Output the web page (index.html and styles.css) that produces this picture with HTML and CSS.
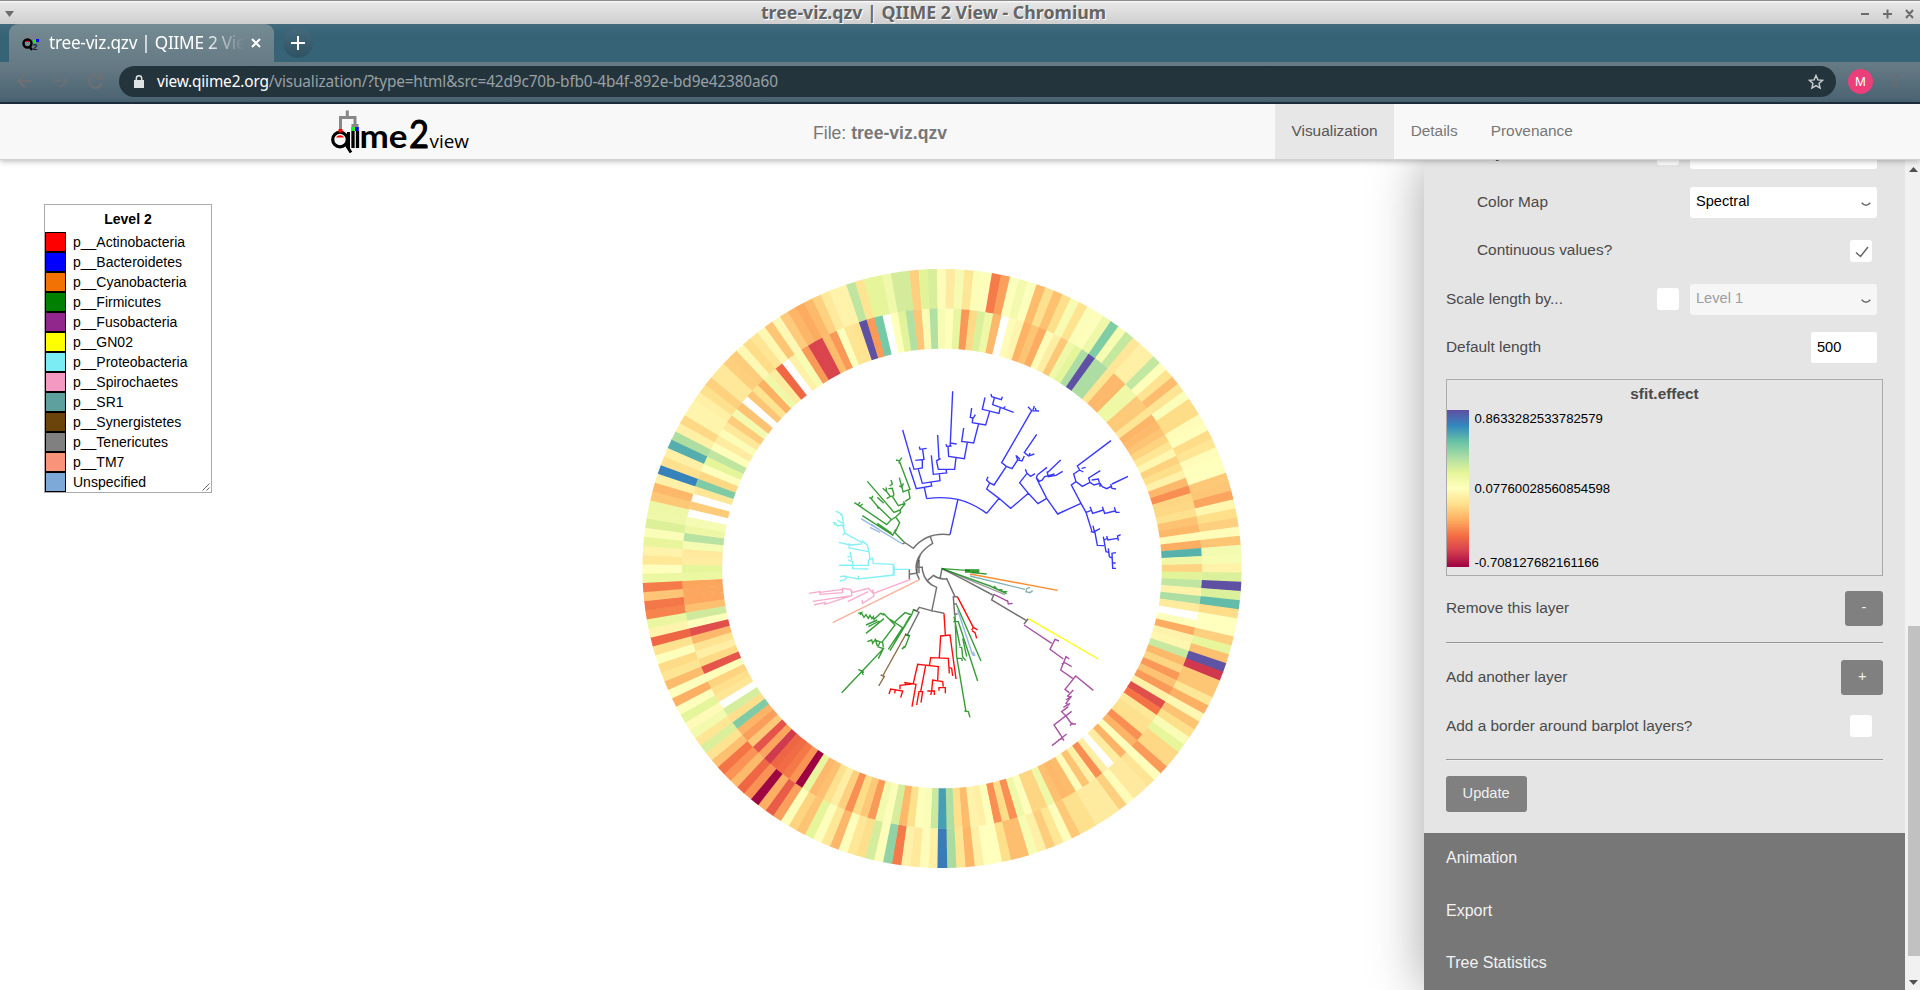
FILE: index.html
```html
<!DOCTYPE html>
<html lang="en">
<head>
<meta charset="utf-8">
<title>tree-viz.qzv | QIIME 2 View</title>
<link rel="stylesheet" href="styles.css">
</head>
<body>
<div class="titlebar">
  <svg class="win-menu" width="9" height="6"><path d="M0 0h9L4.500 6z"/></svg>
  <span class="win-title">tree-viz.qzv | QIIME 2 View - Chromium</span>
  <svg class="win-buttons" width="54" height="12" viewBox="0 0 54 12"><path d="M0 6h8M22 6h9M26.500 1.500v9M45 2l7 8M52 2l-7 8"/></svg>
</div>
<div class="tabstrip">
  <div class="tab">
    <svg class="favicon" width="18" height="18" viewBox="0 0 18 18">
      <path d="M5 5V1.500h9V6" fill="none" stroke="#887f80"/>
      <circle cx="5.500" cy="9.500" r="4" fill="#7a8c94" stroke="#000" stroke-width="2.400"/>
      <path d="M3 8a3 3 0 0 1 5 0z" fill="#f00"/><path d="M7 12l3 4" stroke="#000" stroke-width="2.200"/>
      <path d="M11 6h3v3h-3z" fill="#0f0"/><path d="M14 5h3v3h-3z" fill="#00f"/>
      <text x="10.500" y="16" class="fav-two">2</text>
    </svg>
    <span class="tab-title">tree-viz.qzv | QIIME 2 View</span>
    <svg class="tab-close" width="10" height="10" viewBox="0 0 10 10"><path d="M1 1l8 8M9 1l-8 8"/></svg>
  </div>
  <div class="new-tab"><svg width="14" height="14" viewBox="0 0 14 14"><path d="M7 0v14M0 7h14"/></svg></div>
</div>
<div class="toolbar">
  <svg class="nav-icons" width="88" height="20" viewBox="0 0 88 20">
    <path class="nav-back" d="M15 10H2M8 3.500L1.500 10L8 16.500"/>
    <path class="nav-fwd" d="M36 10h13M43 3.500L49.500 10L43 16.500"/>
    <path class="nav-back" d="M83.500 6A6.500 6.500 0 1 0 85 11.500M85.500 2.500V8H80"/>
  </svg>
  <div class="omnibox">
    <svg class="lock" width="10" height="13" viewBox="0 0 10 13"><path d="M0 5h10v8H0z" fill="#dfe3e5"/><path d="M2.300 5V3.500a2.700 2.700 0 0 1 5.400 0V5" fill="none" stroke="#dfe3e5" stroke-width="1.500"/></svg>
    <span class="url"><b>view.qiime2.org</b>/visualization/?type=html&amp;src=42d9c70b-bfb0-4b4f-892e-bd9e42380a60</span>
    <svg class="star" width="16" height="16" viewBox="0 0 16 16"><path d="M8 1.500l1.900 4.400 4.700.4-3.600 3.100 1.100 4.700L8 11.600l-4.100 2.500L5 9.400 1.400 6.300l4.700-.4z"/></svg>
  </div>
  <div class="avatar">M</div>
  <svg class="kebab" width="4" height="16" viewBox="0 0 4 16"><circle cx="2" cy="3" r="1.700"/><circle cx="2" cy="8" r="1.700"/><circle cx="2" cy="13" r="1.700"/></svg>
</div>

<header class="navbar">
  <svg class="logo" width="144" height="48" viewBox="328 108 144 48">
    <path d="M340.500 131V117.500H355V125M347.300 110.500V117M351.500 125.500H358.500" fill="none" stroke="#888" stroke-width="3"/>
    <circle cx="340" cy="139.500" r="7.300" fill="#f8f8f8" stroke="#000" stroke-width="3.200"/>
    <path d="M336 137.500a4.600 4.600 0 0 1 8 0z" fill="red"/><path d="M338.500 129h4v3.500h-4z" fill="red"/>
    <path d="M345.500 144l5.500 8.500M348.500 132v16" stroke="#000" stroke-width="3"/>
    <path d="M351 127h3.800v4H351z" fill="#0f0"/><path d="M355 127h3.800v4H355z" fill="#00f"/>
    <path d="M353 131v17M357.500 131v17" stroke="#000" stroke-width="3.300"/>
    <text class="logo-word" x="359.500" y="148" textLength="48" lengthAdjust="spacingAndGlyphs">me</text>
    <text class="logo-two" x="409" y="148" textLength="20" lengthAdjust="spacingAndGlyphs">2</text>
    <text class="logo-view" x="429.500" y="148" textLength="39.500" lengthAdjust="spacingAndGlyphs">view</text>
  </svg>
  <div class="file">File: <b>tree-viz.qzv</b></div>
  <nav class="nav"><a class="active">Visualization</a><a>Details</a><a>Provenance</a></nav>
</header>

<main class="main">
  <section class="plot">
    <svg class="canvas" width="1424" height="830" viewBox="0 160 1424 830">
      <g id="rings"></g>
      <g class="branches" transform="translate(790 380) scale(.33333)">
        <path stroke="#0000ff" d="M480 464L504 357M410 356Q460 349 504 358Q550 370 590 400M410 356L403 322M358 262L379 326L425 318L423 306M338 150L372 268L397 264V240M385 268L397 310L450 302L448 282M376 241L402 238L398 209M388 200L390 208L410 205M424 226L430 283L470 279L468 268M440 245L445 268L494 268L498 233M438 243L452 236M447 240L443 165M474 200L476 229L523 236L532 187M468 193L470 199L485 198M480 198L481 189L500 192M481 189L488 34M521 144L515 184L551 189L566 131M548 115L547 128L587 135L599 94M545 84L541 112L550 114L556 104M585 52L577 88L627 100L631 82M603 42L605 50L634 59L637 50M613 54L608 74L631 82L671 97M640 86L646 79"/>
        <path stroke="#0000ff" d="M590 400L627 355M599 309L590 327L627 355L662 385L715 340M594 290L590 300L599 309L612 315L649 259M725 92L635 248L649 259L666 266L683 240M714 80L725 92L747 93M729 90L733 78M738 92L736 84M678 226L683 240L696 243L703 228M690 238L680 228M740 163L703 218L716 228L733 222M716 228L720 219M711 280L689 308L715 340L744 371L770 355M706 268L711 280L722 289L735 281M742 285L739 294L770 355L803 402L873 370M771 262L742 285M742 296L748 304L757 300L764 290L789 283M771 274L775 290L798 286L818 274M772 278L812 240M790 280L794 288M858 305L844 315L873 370L888 397M869 270L851 282L858 305L877 319L900 307M963 182L862 258L869 270L880 276M875 265L887 262M931 272L896 294L900 307L912 315L930 310L937 320L950 326L966 318M905 300L925 297L928 308M930 310V320M962 312L966 325L978 327M966 312L1014 289M888 397L902 392M900 380L908 400L940 390M937 380L944 400L975 393M973 382L978 397H989M888 397L906 455M902 455L915 458L922 496L942 497M909 437L913 455L930 446M940 470L948 515L956 517M943 480L953 474M950 468L954 480L982 475M992 464L983 468L985 482M955 505L958 530L967 535M978 518L966 520L968 565H978M967 549H977"/>
        <path stroke="#008000" d="M342 486L315 458M217 407L308 465L318 447M262 430L305 460M270 438L310 467M315 458L329 428L317 411M207 377L290 434L303 420L317 411L332 397L330 390M193 368L207 377M205 374L210 366M210 378L218 372M303 418L262 378L265 386M262 378L240 352M238 352L245 356L248 347M330 390L312 397L232 304M262 352L281 370M330 390L345 372L340 364M345 370L325 377L307 349M290 356L300 350L313 347M278 325L290 335L288 322M290 335L300 348M295 326L307 325L312 345M299 318L307 312L303 300M345 364L360 355L356 332M340 335L360 328L328 243M318 240L328 243L336 233M328 243V251M340 338L335 320L328 293M328 318L336 322L340 310"/>
        <path stroke="#7aa5dc" d="M213 416L338 492M240 442L270 457M243 432L272 452"/>
        <path class="strong" stroke="#7df0f5" d="M137 393L150 400L157 410L162 440M150 400L158 405M128 428H135L142 438L155 435L160 440L165 460L215 487V492M132 436L136 426M142 420L158 430M158 466L166 456M147 487L180 495L215 492M178 490V500M173 503L235 515M215 482L232 495L238 520L240 540M180 515L185 540M172 530L185 530M175 540L188 545V566L235 567M235 540L248 535L250 550L310 553V585M147 556H235V540"/>
        <path class="trunk" d="M338 492L346 487M342 486L370 505Q410 455 480 464M420 467L428 490Q378 520 378 565M392 522Q382 545 380 580"/>
      </g>
      <g class="branches" transform="translate(790 560) scale(.33333)">
        <path class="trunk" d="M358 28V58M358 43L378 40M378 25Q380 45 388 58M384 22H397V30Q405 70 440 82L425 155M387 0V40M380 153L388 142Q420 152 462 160M370 148L387 157L352 225M345 222L360 227M412 62L430 46Q450 60 470 56L495 110M450 56L456 26L520 58L608 105M612 103L605 120L710 182M715 176L702 192M488 110H502M490 112L494 165M493 132H501M495 162H503"/>
        <path stroke="#808080" d="M456 26L645 104"/>
        <path class="strong" stroke="#7df0f5" d="M312 15V45L205 57V47M312 28H358M205 57L170 50L165 60L150 63M150 50L165 48L172 55M148 16H190"/>
        <path class="strong" stroke="#f7a8ca" d="M362 58L250 100L235 85L185 98L182 88L158 85V98L90 103V95L57 100M158 88L90 97M185 90V107L68 124M235 95L173 125M248 88L252 108L218 130L216 120M185 107L105 133V127L72 135"/>
        <path stroke="#fa9a7c" d="M390 58L128 188"/>
        <path stroke="#008000" d="M205 160L215 157L210 165M215 160L222 172L228 164L235 175L240 166L246 176L250 170L252 178L272 160L282 165M280 160L315 195L275 248M228 195L262 180M235 200L268 183M228 220L282 176M300 178L338 203L295 268M315 185L345 158L365 165L300 272M360 168L310 255M365 165L370 150L378 152M232 245L245 240L248 250L256 238L262 258M255 240L278 248L280 262M270 246L265 258M262 260L280 266L215 335L220 345M265 296L280 266M205 328L222 337M215 335L155 398M348 225L358 228L345 262M335 265L345 262M337 268L343 258"/>
        <path stroke="#008000" d="M500 135L573 303M490 185L505 185L563 363M495 165L500 290L528 455M492 170L510 258M508 262L515 262L518 290L527 302M500 295H515L517 303M518 235L530 290M523 453L535 455L540 472M456 26L600 78L650 101M612 78L622 88L638 90M640 95H652M545 38L590 42"/>
        <path class="thick" stroke="#008000" d="M525 33H568"/>
        <path stroke="#008000" d="M456 26L540 32"/>
        <path class="strong" stroke="#fa8824" d="M540 42L803 91"/>
        <path stroke="#5f9ea0" d="M540 48L705 88M720 82L710 86L708 95L720 98L728 92"/>
        <path stroke="#902288" d="M612 103L655 125M652 120L655 132L668 130"/>
        <path stroke="#902288" d="M702 195L785 250M807 243L795 238L780 268L820 297M838 297L828 290L812 330L848 355M815 312L825 308L845 320M910 391L857 348L825 388L838 398M850 390L833 408L842 412L828 430L838 436M845 408L828 420M840 430L820 442M835 440L815 455L828 468M845 454L792 495L812 525M828 468L845 492L858 492M840 497L848 488M830 522L786 557M812 525L822 542M805 540L818 535"/>
        <path class="strong" stroke="#ffff00" d="M715 176L925 297"/>
        <path stroke="#7aa5dc" d="M503 150L548 285M548 285L556 287M550 275L553 285"/>
        <path class="strong" stroke="#ff0000" d="M502 110L550 202M545 210L550 202L563 210M546 212L555 218L560 235M462 160L466 225M448 293L452 228L480 225L498 357M418 318L422 293L475 295L478 340M475 322L485 325L488 348M370 370L383 313L445 320L443 360M348 376L345 368L378 373L366 440M365 372L330 376V388M297 402L302 387L338 393L332 413M316 388L314 400M407 316L392 395M380 435L387 395H398L393 428M425 395L428 360L458 365L460 380M412 393H433V405M425 395L422 405M447 392V383H466V400"/>
        <path stroke="#6b4513" d="M348 222L278 348M272 345L283 349L266 378"/>
      </g>
    </svg>
    <div class="legend">
      <h4>Level 2</h4>
      <ul>
        <li><i class="sw red"></i>p__Actinobacteria</li>
        <li><i class="sw blue"></i>p__Bacteroidetes</li>
        <li><i class="sw orange"></i>p__Cyanobacteria</li>
        <li><i class="sw green"></i>p__Firmicutes</li>
        <li><i class="sw purple"></i>p__Fusobacteria</li>
        <li><i class="sw yellow"></i>p__GN02</li>
        <li><i class="sw cyan"></i>p__Proteobacteria</li>
        <li><i class="sw pink"></i>p__Spirochaetes</li>
        <li><i class="sw teal"></i>p__SR1</li>
        <li><i class="sw brown"></i>p__Synergistetes</li>
        <li><i class="sw gray"></i>p__Tenericutes</li>
        <li><i class="sw salmon"></i>p__TM7</li>
        <li><i class="sw sky"></i>Unspecified</li>
      </ul>
      <svg class="grip" width="8" height="8" viewBox="0 0 8 8"><path d="M.5 7.500l7-7M4.500 7.500l3-3"/></svg>
    </div>
  </section>
  <aside class="panel">
    <div class="panel-body">
      <div class="row"><label>Color by...</label><span class="check"></span><span class="select"></span></div>
      <div class="row indent"><label>Color Map</label><span class="select">Spectral<svg width="10" height="5" viewBox="0 0 10 5"><path d="M.7.7Q5 5.800 9.300.7"/></svg></span></div>
      <div class="row indent"><label>Continuous values?</label><span class="check solo"><svg width="14" height="12" viewBox="0 0 14 12"><path d="M1 6.500L5.500 10.500L13 1"/></svg></span></div>
      <div class="row"><label>Scale length by...</label><span class="check"></span><span class="select disabled">Level 1<svg width="10" height="5" viewBox="0 0 10 5"><path d="M.7.7Q5 5.800 9.300.7"/></svg></span></div>
      <div class="row"><label>Default length</label><span class="input">500</span></div>
      <div class="scale">
        <h4>sfit.effect</h4>
        <div class="scale-body">
          <div class="ramp"></div>
          <div class="ticks"><span>0.8633282533782579</span><span class="mid">0.07760028560854598</span><span>-0.708127682161166</span></div>
        </div>
      </div>
      <div class="row act"><label>Remove this layer</label><span class="btn">-</span></div>
      <hr>
      <div class="row act"><label>Add another layer</label><span class="btn">+</span></div>
      <div class="row border-row"><label>Add a border around barplot layers?</label><span class="check solo"></span></div>
      <hr>
      <span class="btn update">Update</span>
    </div>
    <div class="accordion"><div>Animation</div><div>Export</div><div>Tree Statistics</div></div>
  </aside>
  <div class="scrollbar">
    <svg width="9" height="5" viewBox="0 0 9 5"><path d="M0 5h9L4.500 0z"/></svg>
    <div class="thumb"></div>
    <svg width="9" height="5" viewBox="0 0 9 5"><path d="M0 0h9L4.500 5z"/></svg>
  </div>
</main>
<script src="rings.js"></script>
</body>
</html>
```
FILE: styles.css
```css
* { box-sizing: border-box; }
body { margin: 0; width: 1920px; height: 990px; overflow: hidden; background: #fff; font-family: "Liberation Sans", Arial, sans-serif; font-size: 15.4px; display: flex; flex-direction: column; }
svg { display: block; flex: none; }

.titlebar { height: 24px; flex: none; display: flex; align-items: center; justify-content: space-between; padding: 2px 5px 0 5px; border-top: 1px solid #8f8c8f; background: linear-gradient(#fff 0, #e6e6e6 2px, #cfcfcf); }
.win-menu { fill: #6b6b6b; }
.win-title { font: bold 17.8px/22px "Noto Sans", sans-serif; color: #656565; text-shadow: 1px 1px 0 #fff; margin: 0 8px 3px 0; white-space: nowrap; }
.win-buttons { fill: none; stroke: #6c6c6c; stroke-width: 2; }

.tabstrip { height: 38px; flex: none; background: linear-gradient(#436b7d, #376377 10px); display: flex; padding-left: 9px; }
.tab { width: 265px; height: 38px; border-radius: 9px 9px 0 0; background: linear-gradient(#758b93, #667b85); display: flex; align-items: center; padding-left: 13px; }
.fav-two { font: bold 9px "Liberation Sans", sans-serif; fill: #223; }
.tab-title { width: 196px; margin-left: 9px; padding-bottom: 1px; overflow: hidden; white-space: nowrap; font: 17.2px/24px "Noto Sans", sans-serif; letter-spacing: -.25px; color: #fff; -webkit-mask-image: linear-gradient(90deg, #000 155px, transparent 195px); mask-image: linear-gradient(90deg, #000 155px, transparent 195px); }
.tab-close { margin-left: 6px; fill: none; stroke: #fff; stroke-width: 2; }
.new-tab { width: 30px; height: 30px; margin: 4px 0 0 9px; border-radius: 50%; background: linear-gradient(#456a7a, #2e5264); display: flex; align-items: center; justify-content: center; }
.new-tab svg { stroke: #fff; stroke-width: 2; }

.toolbar { height: 42px; flex: none; display: flex; align-items: flex-start; padding: 4px 0 0 17px; background: linear-gradient(#687c86, #4a6272); border-bottom: 2px solid #1d313e; }
.nav-icons { margin-top: 5px; fill: none; stroke-width: 2; }
.nav-back { stroke: #6f7074; }
.nav-fwd { stroke: #667078; }
.omnibox { width: 1717px; height: 31px; margin-left: 14px; border-radius: 16px; background: #24343c; display: flex; align-items: center; padding: 0 12px 0 15px; }
.lock { margin-bottom: 1px; }
.url { flex: 1; margin-left: 13px; font: 15.4px/30px "Noto Sans", sans-serif; letter-spacing: -.16px; color: #98a1a5; white-space: nowrap; }
.url b { font-weight: normal; color: #fff; }
.star { fill: none; stroke: #ccd1d3; stroke-width: 1.4; }
.avatar { width: 25px; height: 25px; margin: 3px 0 0 12px; border-radius: 50%; background: #ec3f7a; color: #fff; font: 13px/25px "Liberation Sans", sans-serif; text-align: center; }
.kebab { margin: 7px 0 0 21px; fill: #6e6a6b; }

.navbar { height: 56px; flex: none; display: flex; position: relative; z-index: 3; background: #f8f8f8; border-bottom: 1px solid #d2d2d2; box-shadow: 0 1px 6px rgba(0,0,0,.3); }
.logo { margin: 4px 0 0 328px; }
.logo-word { font: bold 33px Lato, sans-serif; }
.logo-two { font: 38px Lato, sans-serif; stroke: #000; stroke-width: 1px; }
.logo-view { font: 18.500px "Open Sans", sans-serif; }
.file { width: 462px; margin-left: 341px; font-size: 17.6px; line-height: 59px; color: #777; white-space: nowrap; }
.nav { display: flex; }
.nav a { height: 55px; padding: 0 16.5px; line-height: 53px; color: #777; }
.nav .active { background: #e7e7e7; color: #555; }

.main { flex: 1; min-height: 0; display: flex; overflow: hidden; }
.plot { width: 1424px; position: relative; padding: 44px; }
.canvas { position: absolute; left: 0; top: 0; }
.branches path { fill: none; stroke-width: 4.2; opacity: .78; }
.branches .strong { opacity: .95; }
.branches .trunk { stroke: #4a4a4a; stroke-width: 4.4; }
.branches .thick { stroke-width: 11; }

.legend { position: relative; width: 168px; height: 289px; border: 1px solid #aaa; background: #fff; font-size: 14px; color: #000; }
.legend h4 { margin: 0; height: 27px; font-size: 14px; line-height: 29px; text-align: center; }
.legend ul { list-style: none; margin: 0; padding: 0; }
.legend li { display: flex; align-items: center; height: 20px; line-height: 21px; white-space: nowrap; }
.sw { width: 21px; height: 20px; border: 1px solid #000; margin-right: 7px; }
.red { background: #f00; } .blue { background: #00f; } .orange { background: #f27304; } .green { background: #008000; }
.purple { background: #91278d; } .yellow { background: #ff0; } .cyan { background: #7cecf4; } .pink { background: #f49ac2; }
.teal { background: #5da09e; } .brown { background: #6b440b; } .gray { background: #808080; } .salmon { background: #f99379; } .sky { background: #7da9d8; }
.grip { position: absolute; right: 1px; bottom: 1px; stroke: #666; }

.panel { width: 481px; flex: none; position: relative; z-index: 1; height: 830px; display: flex; flex-direction: column; background: #e5e5e5; box-shadow: 0 0 50px rgba(0,0,0,.36); color: #4a4a4a; overflow: hidden; }
.panel-body { margin-top: -30px; padding: 0 22px 0 22px; height: 703px; flex: none; }
.row { display: flex; align-items: center; height: 48.4px; padding-right: 6px; }
.row:first-child { height: 47.4px; margin-bottom: 1px; }
.row label { flex: 1; line-height: 20px; padding-bottom: 1px; }
.row.indent label { padding-left: 31px; }
.select, .input { background: #fff; color: #000; height: 31px; border-radius: 3px; padding: 0 6px; line-height: 29px; }
.select { width: 187px; display: flex; justify-content: space-between; font-size: 14.6px; }
.select svg { margin-top: 15px; fill: none; stroke: #666; stroke-width: 1.4; }
.select.disabled { background: #f6f6f6; color: #9d9d9d; }
.input { width: 66px; line-height: 31px; font-size: 14.6px; }
.check { width: 22px; height: 22px; border-radius: 3px; background: #fff; margin-right: 11px; display: flex; align-items: center; justify-content: center; }
.check.solo { margin-right: 5px; }
.check svg { margin: 2px 0 0 2px; fill: none; stroke: #666; stroke-width: 1.5; }
.scale { margin-top: 7px; height: 197px; border: 1px solid #aaa; }
.scale h4 { margin: 0; height: 30px; font-size: 15.4px; line-height: 28px; text-align: center; }
.scale-body { display: flex; }
.ramp { width: 22px; height: 157px; background: linear-gradient(#5e4fa2, #3288bd 10%, #66c2a5 20%, #abdda4 30%, #e6f598 40%, #ffffbf 50%, #fee08b 60%, #fdae61 70%, #f46d43 80%, #d53e4f 90%, #9e0142); }
.ticks { height: 161px; margin-left: 5.500px; display: flex; flex-direction: column; justify-content: space-between; font-size: 13.2px; line-height: 17px; color: #000; }
.ticks .mid { margin-bottom: 4px; }
.row.act { height: 35px; margin-top: 15px; padding: 0; }
hr { height: 2px; margin: 16px 0 0; border: 0; border-top: 1px solid #979797; border-bottom: 1px solid #ececec; }
.panel hr + .row.act { margin-top: 16px; }
.btn { background: #808080; color: #f0f0f0; border-radius: 3px; height: 35px; line-height: 33px; padding: 0 16.6px; font-size: 14.6px; }
.border-row { margin-top: 7px; height: 49px; }
.border-row + hr { margin-top: 8px; }
.update { display: block; width: 81px; margin-top: 15px; height: 36px; line-height: 34px; }
.accordion { flex: none; height: 157px; background: #777; color: #f2f2f2; font-size: 16px; padding-left: 22px; }
.accordion div { height: 52.5px; line-height: 49px; }

.scrollbar { width: 15px; position: relative; z-index: 1; background: #f1f1f1; display: flex; flex-direction: column; align-items: center; padding: 7px 0 5px 2px; }
.scrollbar svg { fill: #505050; }
.thumb { width: 12px; height: 330px; margin: 454px 0 24px; background: #c1c1c1; }
```
FILE: rings.js
```js
// Cell colours, counter-clockwise from the bottom; "-" is a missing value.
const outer = `3a7cb7 aadca0 fee593 fdb567 fff0a8 ffffbe ffffbe fee08b fdbe70 fdbe70 f7fcb2 fff0a8 fdcd7c ffe796 fffdbc fdc877 fee18e
fee18e ffeba0 ffeba0 ffeba0 fdd07f fffbb9 ffe99f ffe99f fee494 ffffbb fb9b5a fed884 fed884 e8f69b f8fcb4 fee08b fdc473
fff7b2 fdb063 fee796 fdc675 fdc675 d0384d 5e53a4 fdbf70 e8f69b fdcf7e ffffbe ffffbe fedd89 62bca9 daf09b 5e50a3 daf09a
fff2a9 f6fcb2 f3fbb0 fdc574 fffcb9 fdcf7e fedf8a fff6b0 fca55e fdc676 fdc978 ffffbd ffffbd fffcb9 ffe695 fedc88 ffffbb
fffbb8 fedd89 fedd89 fbfeb8 fee594 fdbc6e fee491 ffffbc c1e7a0 fff0a6 fff0a6 ffe698 c5e89f f6fcb1 7fcda5 eff8a8 fdfebb
fbfdb9 fee491 f8fcb3 fee08c fdc170 fee08e fdbb6c fcfebb f3fab0 fdfebb fb9f5c f67b4a fdfebb fbfdb8 fee697 f5fbb1 feeaa0
fffbb8 d8ee9a e3f498 fdcf7f d3eb9b d3eb9b f0f8ab e7f59a e7f59a fee594 bfe5a1 fff3ab fff3ab ffe99d fed281 fdba6b fcac61
fdb567 fdcb7b fff8b4 fdc574 fff8b3 ffe594 fedd89 fdf9b5 fdcd7c fed07e ffe899 ffe899 fed17f ffe08d fff0a6 fff4ac fff4ac
fed884 fff0a6 aedda2 54aead fff0a6 fee18e 3682ba fff0a7 fdb869 fdc876 eef7a5 eff8a8 dcf099 fafdb8 e8f59b fff2aa fee898
feffbd ecf7a2 f57c4a fdc575 f4774a f7834d eaf6a0 fff4ae ee6644 fee28f ffffbc fedb87 fee593 fdbb6c feffbd fdb063 fdfebb
e5f599 fffab7 f3faae fee695 dbef9b fee391 fdbf70 f57446 fa9355 fdba6b ee6644 fa9255 9e0742 fdb063 e95c47 fb9f5c fcfeba
fed481 fdc473 e6f59a fdfebb fee796 fdb76a fdfebb fee796 fedf8b d5ec9c fbfdb8 90d2a4 f57a49 fff1aa fee99d fffcba fff0a6`;

const inner = `489fb4 aedea3 fee08c fdbb6c fff3ac fff0a6 ffffbc fa8f53 fedd89 fa8f53 eff8a8 fffdbc fed683 fed683 eff8a7 fdc070 fdb86a
fdbb6c fffbb8 fdc473 fff1a8 f98e53 ffeea4 - feeca1 fdb467 ffffbb fdb467 f98f53 fee08d fee18e ffe898 f57245 e0504a
fff1a8 fa9a58 fdc272 fa9857 fed683 fdb96a c7e89f fff6b0 fff3ab fdad61 ffffbc - feeb9e acdda3 fff3aa c0e6a1 e2f39a
fed482 f0f8a8 58b2ab fdae62 fffbb8 fdb869 fdc372 fee18e fed884 fed582 f98e52 fdb96b fff1a8 fee08c fed27f fff6b0 ffe695
fed481 fdc473 fdba6b fdb668 ffe594 fdca79 fdca79 eef8a5 eef8a5 fdb96b fdb96b fee594 aedda3 aedda3 5e50a3 aedda3 e5f59a
eff8a8 fdc778 feeda2 fffcba fdac61 fdc473 fdb264 fff5ae fffbb8 - fdb96b eff8a7 dbf09b fed986 fa9757 e9f69f ffffbc
f7fcb3 b2dfa2 fafcb5 fdc676 b2dfa2 e2f399 ffffbc - 76c9a6 fa9a58 5e50a3 fee391 fee594 feffbc fa9857 fdbb6c d9444d
d9444d fa9a58 f7fcb3 fff1a8 - f06744 feeca0 eff8a8 fdb163 fee391 fdc675 - fdc372 f3fab0 fdcd7c ffe899 fbfdb7
ffeca0 feffbb bfe5a1 e6f59a fdfebb fed885 7fcba6 ffe797 - fdcc7b - f5fbb2 edf7a5 b8e2a1 f5fbb2 fee99d feeca0
e5f59a ecf7a2 fca55d fca75f fca65e fdc070 cfea9c fdfebb e04f4b fdb96b fee492 ffeea4 fed986 e5554a ffffbc fed481 fee08d
fee696 - d5ed9c fedf8b 7fcba6 fdb467 fb9d5b fdc979 e5544a fca55e d03a4d ee6544 f16b44 f57848 fa9455 9e0142 eaf69f
fdb86b fdbf70 fee18e ffeea4 fdd07f fa8f53 fedd89 fdc877 fa9a58 f3fab0 fbfdb8 d5ed9c fdb869 fee08d fdfebb fafdb7 c8e99e`;

const CX = 942, CY = 568.5;
function drawRing(data, r0, r1) {
  const cells = data.trim().split(/\s+/);
  const step = 2 * Math.PI / cells.length;
  const point = (r, a) => (CX + r * Math.sin(a)).toFixed(2) + " " + (CY + r * Math.cos(a)).toFixed(2);
  return cells.map((c, k) => {
    if (c === "-") return "";
    const a = (k - 0.5) * step, next = cells[(k + 1) % cells.length];
    // A slight overlap with the following cell hides the hairline between them.
    const b = (k + 0.5) * step + (next === "-" || k === cells.length - 1 ? 0 : 0.002);
    return `<path fill="#${c}" d="M${point(r0, a)}L${point(r1, a)}L${point(r1, b)}L${point(r0, b)}z"/>`;
  }).reverse().join("");
}
document.getElementById("rings").innerHTML = drawRing(outer, 259.7, 299.6) + drawRing(inner, 219.8, 260);
```
